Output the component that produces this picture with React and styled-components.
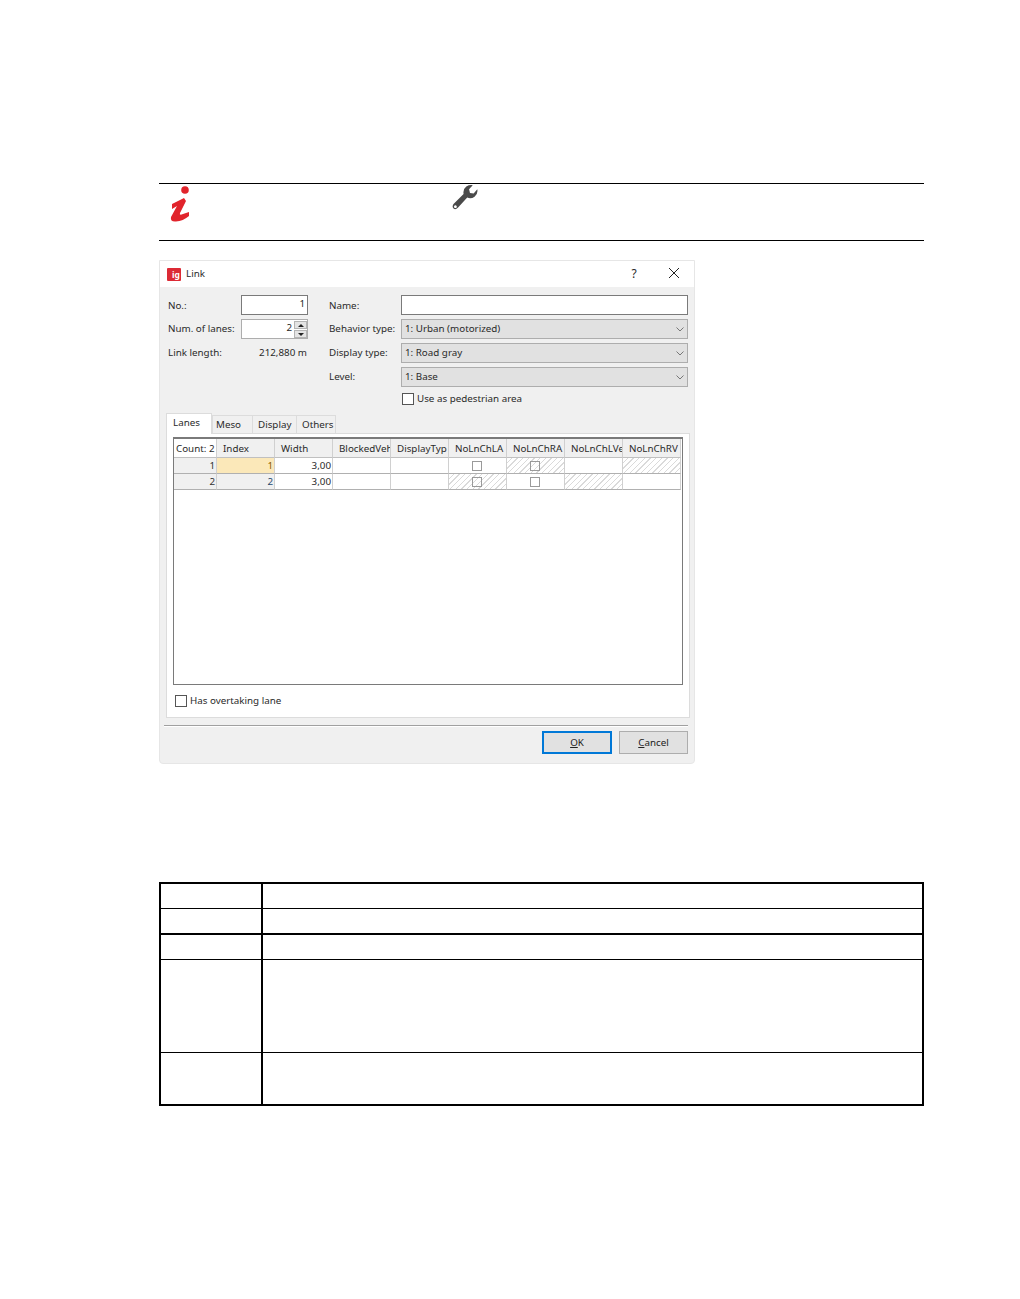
import React from "react";
import styled, { createGlobalStyle, css } from "styled-components";

const Global = createGlobalStyle`
  html, body { margin: 0; background: #fff; }
  body { font-family: "Noto Sans", "Open Sans", sans-serif; font-size: 9.8px; color: #2a2a2a; }
`;
const Page = styled.div`
  width: 765px;
  padding: 183px 96px 193px 159px;
`;
const Note = styled.section`
  height: 56px;
  border-top: 1px solid #000;
  border-bottom: 1px solid #000;
  display: flex;
  align-items: flex-start;
`;
const InfoIcon = styled.svg`
  width: 40px;
  height: 50px;
  margin-top: -4px;
  filter: blur(0.4px);
`;
const ToolIcon = styled.svg`
  width: 37px;
  height: 32px;
  margin: -2px 0 0 247px;
  filter: blur(0.5px);
`;
const Dialog = styled.div`
  width: 534px;
  height: 502px;
  margin-top: 19px;
  border: 1px solid #e6e6e6;
  border-radius: 0 0 4px 4px;
  background: #f0f0f0;
  display: flex;
  flex-direction: column;
`;
const TitleBar = styled.header`
  height: 26px;
  background: #fff;
  display: flex;
  align-items: center;
  padding-left: 7px;
  line-height: 24px;
`;
const AppLogo = styled.span`
  width: 14px;
  height: 13px;
  background: #dc2a35;
  color: #fff;
  font-size: 8.5px;
  font-weight: 700;
  line-height: 13px;
  text-align: right;
  padding-right: 1px;
  box-sizing: border-box;
  border-radius: 1px;
`;
const Title = styled.span`
  margin-left: 5px;
  flex: 1;
`;
const Help = styled.span`
  width: 40px;
  font-size: 12px;
  text-align: center;
  margin-right: 14px;
`;
const CloseIcon = styled.svg`
  width: 12px;
  height: 12px;
  margin-right: 14px;
  margin-top: -2px;
`;
const Body = styled.div`
  flex: 1;
  padding: 8px 4px 0 6px;
  display: flex;
  flex-direction: column;
`;
const Form = styled.div`
  margin-left: 2px;
  display: grid;
  grid-template-columns: 73px 67px 21px 72px 287px;
  grid-template-rows: repeat(4, 20px) 15px;
  row-gap: 4px;
  align-items: center;
`;
const Label = styled.label`
  line-height: ${(p) => (p.$first ? 21 : 19)}px;
  height: 20px;
  white-space: nowrap;
  grid-column: ${(p) => p.$col};
`;
const Input = styled.div`
  height: 20px;
  box-sizing: border-box;
  background: #fff;
  border: 1px solid ${(p) => p.$border || "#7a7a7a"};
  text-align: right;
  padding-right: 2px;
  line-height: 16px;
  grid-column: ${(p) => p.$col};
  position: relative;
`;
const SpinInput = styled(Input)`
  padding-right: 15px;
`;
const Spin = styled.span`
  position: absolute;
  top: 1px;
  right: 0;
  width: 13px;
  height: 17px;
  display: flex;
  flex-direction: column;
  gap: 1px;
`;
const SpinPart = styled.span`
  flex: 1;
  background: #e4e4e4;
  border: 1px solid #b4b4b4;
  display: flex;
  align-items: center;
  justify-content: center;
  &::after {
    content: "";
    border-left: 3px solid transparent;
    border-right: 3px solid transparent;
    ${(p) => (p.$up ? "border-bottom: 3px solid #222;" : "border-top: 3px solid #222;")}
  }
`;
const Value = styled.div`
  text-align: right;
  grid-column: 2;
  line-height: 19px;
  height: 20px;
  padding-right: 1px;
`;
const Select = styled.div`
  grid-column: 5;
  height: 20px;
  box-sizing: border-box;
  background: #e1e1e1;
  border: 1px solid #adadad;
  display: flex;
  align-items: center;
  justify-content: space-between;
  padding: 0 3px;
  line-height: 16px;
`;
const ChevronIcon = styled.svg`
  width: 8px;
  height: 5px;
`;
const CheckRow = styled.div`
  display: flex;
  align-items: center;
  gap: 3px;
  ${(p) => p.$col && css`grid-column: ${p.$col}; margin-left: 1px; height: 15px;`}
`;
const Box = styled.span`
  width: 12px;
  height: 12px;
  box-sizing: border-box;
  background: #fff;
  border: 1px solid #555;
  display: block;
`;
const Tabs = styled.div`
  display: flex;
  align-items: flex-end;
  margin-top: 7px;
  height: 20px;
  position: relative;
`;
const Tab = styled.div`
  width: ${(p) => p.$w}px;
  box-sizing: border-box;
  text-align: left;
  padding-left: ${(p) => p.$pad}px;
  border: 1px solid #dcdcdc;
  border-bottom: none;
  margin-right: ${(p) => (p.$active ? 0 : -1)}px;
  height: ${(p) => (p.$active ? 21 : 18)}px;
  line-height: ${(p) => (p.$active ? 18 : 17)}px;
  background: ${(p) => (p.$active ? "#fff" : "#f0f0f0")};
  position: relative;
  z-index: ${(p) => (p.$active ? 1 : 0)};
  ${(p) => p.$active && "margin-bottom: -1px;"}
`;
const Panel = styled.div`
  width: 524px;
  height: 285px;
  box-sizing: border-box;
  background: #fff;
  border: 1px solid #dcdcdc;
  padding: 3px 6px 0;
  display: flex;
  flex-direction: column;
`;
const Grid = styled.div`
  width: 510px;
  height: 248px;
  box-sizing: border-box;
  border: 1px solid #7a7a7a;
  border-top-width: 2px;
  display: grid;
  grid-template-columns: 43px repeat(8, 58px);
  grid-auto-rows: 16px;
  grid-template-rows: 19px;
  align-content: start;
`;
const cellKinds = {
  corner: "background: #fff; text-align: left; padding-left: 2px;",
  head: "background: #f0f0f0; text-align: left; padding-left: 6px;",
  rowHead: "background: #f0f0f0; text-align: right; color: #333;",
  index: "background: #f0f0f0; text-align: right; color: #27496d;",
  active: "background: #fbe8b9; text-align: right; color: #8a5a00;",
  data: "background: #fff; text-align: right;",
};
const Cell = styled.div`
  box-sizing: border-box;
  border-right: 1px solid #d0d0d0;
  border-bottom: 1px solid ${(p) => (p.$kind === "head" || p.$kind === "corner" ? "#c0c0c0" : "#b0b0b0")};
  padding: 0 1px;
  white-space: nowrap;
  overflow: hidden;
  line-height: ${(p) => (p.$kind === "head" || p.$kind === "corner" ? 20 : 16)}px;
  display: ${(p) => (p.$center ? "flex" : "block")};
  align-items: center;
  justify-content: center;
  ${(p) => cellKinds[p.$kind]}
  ${(p) =>
    p.$hatch &&
    css`
      background: repeating-linear-gradient(135deg, #fff 0, #fff 3px, #dadada 3px, #dadada 4px);
    `}
`;
const CellBox = styled.span`
  width: 10px;
  height: 10px;
  box-sizing: border-box;
  display: block;
  margin-left: -1px;
  border: 1px solid #9a9a9a;
  background: ${(p) => (p.$hatch ? "transparent" : "#fff")};
`;
const PanelCheck = styled(CheckRow)`
  margin: 9px 0 0 2px;
  height: 13px;
`;
const FooterRule = styled.div`
  margin: 7px 2px 0 -2px;
  border-top: 1px solid #a0a0a0;
  border-bottom: 1px solid #fff;
`;
const Footer = styled.div`
  display: flex;
  justify-content: flex-end;
  gap: 7px;
  margin-top: 4px;
  padding-right: 2px;
`;
const Button = styled.button`
  width: ${(p) => (p.$primary ? 70 : 69)}px;
  height: 23px;
  box-sizing: border-box;
  font: inherit;
  color: #222;
  padding: 0;
  background: #e1e1e1;
  border: ${(p) => (p.$primary ? "2px solid #0078d7" : "1px solid #adadad")};
  u { text-underline-offset: 1px; }
`;
const Table = styled.div`
  margin-top: 118px;
  border: 2px solid #000;
  width: 765px;
  box-sizing: border-box;
`;
const Row = styled.div`
  display: grid;
  grid-template-columns: 102px 1fr;
  height: ${(p) => p.$h}px;
  border-top: ${(p) => p.$top || 0}px solid #000;
`;
const KeyCell = styled.div`
  border-right: 2px solid #000;
`;
const ValCell = styled.div``;

const headers = ["BlockedVeh", "DisplayTyp", "NoLnChLA", "NoLnChRA", "NoLnChLVe", "NoLnChRV"];

function Chevron() {
  return (
    <ChevronIcon viewBox="0 0 8 5">
      <path d="M0.5 0.5 L4 4 L7.5 0.5" stroke="#777" strokeWidth="1" fill="none" />
    </ChevronIcon>
  );
}

function LaneRow({ n, active, cells }) {
  return (
    <>
      <Cell $kind="rowHead">{n}</Cell>
      <Cell $kind={active ? "active" : "index"}>{n}</Cell>
      <Cell $kind="data">3,00</Cell>
      <Cell $kind="data" />
      <Cell $kind="data" />
      {cells.map((c, i) => (
        <Cell key={i} $kind="data" $center $hatch={c.hatch}>
          {c.box && <CellBox $hatch={c.hatch} />}
        </Cell>
      ))}
    </>
  );
}

export default function App() {
  return (
    <Page>
      <Global />
      <Note>
        <InfoIcon viewBox="0 0 40 50">
          <circle cx="26" cy="10" r="3.8" fill="#e1242c" />
          <path
            d="M13 24 L25 18 L27 21 L21 33 Q20 36 24 34 L30 32 L30 36 Q24 41 17 41.5 Q11 42 12 37 L18 26 L13 29 Z"
            fill="#e1242c"
          />
        </InfoIcon>
        <ToolIcon viewBox="0 0 40 35">
          <path
            fillRule="evenodd"
            d="M8 24 L19 13 Q18 8 22 5 Q25 3 29 3.5 L25 8 L26 12 L30 12.5 L34 8 Q35 13 31 16 Q27 19 23 17 L13 28 Q10 31 8 29 Q6 27 8 24 Z M10 25.5 a1.5 1.5 0 1 0 0.1 0 Z"
            fill="#4a4a4a"
          />
        </ToolIcon>
      </Note>
      <Dialog>
        <TitleBar>
          <AppLogo>ig</AppLogo>
          <Title>Link</Title>
          <Help>?</Help>
          <CloseIcon viewBox="0 0 12 12">
            <path d="M1 1 L11 11 M11 1 L1 11" stroke="#222" strokeWidth="1" fill="none" />
          </CloseIcon>
        </TitleBar>
        <Body>
          <Form>
            <Label $col={1} $first>No.:</Label>
            <Input $col={2}>1</Input>
            <Label $col={4} $first>Name:</Label>
            <Input $col={5} />
            <Label $col={1}>Num. of lanes:</Label>
            <SpinInput $col={2} $border="#adadad">
              2
              <Spin>
                <SpinPart $up />
                <SpinPart />
              </Spin>
            </SpinInput>
            <Label $col={4}>Behavior type:</Label>
            <Select>
              1: Urban (motorized)
              <Chevron />
            </Select>
            <Label $col={1}>Link length:</Label>
            <Value>212,880 m</Value>
            <Label $col={4}>Display type:</Label>
            <Select>
              1: Road gray
              <Chevron />
            </Select>
            <Label $col={4}>Level:</Label>
            <Select>
              1: Base
              <Chevron />
            </Select>
            <CheckRow $col={5}>
              <Box />
              Use as pedestrian area
            </CheckRow>
          </Form>
          <Tabs>
            <Tab $w={46} $active $pad={6}>Lanes</Tab>
            <Tab $w={41} $pad={3}>Meso</Tab>
            <Tab $w={45} $pad={5}>Display</Tab>
            <Tab $w={40} $pad={5}>Others</Tab>
          </Tabs>
          <Panel>
            <Grid>
              <Cell $kind="corner">Count: 2</Cell>
              <Cell $kind="head">Index</Cell>
              <Cell $kind="head">Width</Cell>
              {headers.map((h) => (
                <Cell key={h} $kind="head">{h}</Cell>
              ))}
              <LaneRow
                n={1}
                active
                cells={[{ box: true }, { box: true, hatch: true }, {}, { hatch: true }]}
              />
              <LaneRow
                n={2}
                cells={[{ box: true, hatch: true }, { box: true }, { hatch: true }, {}]}
              />
            </Grid>
            <PanelCheck>
              <Box />
              Has overtaking lane
            </PanelCheck>
          </Panel>
          <FooterRule />
          <Footer>
            <Button $primary><u>O</u>K</Button>
            <Button><u>C</u>ancel</Button>
          </Footer>
        </Body>
      </Dialog>
      <Table>
        <Row $h={24}><KeyCell /><ValCell /></Row>
        <Row $h={24} $top={1}><KeyCell /><ValCell /></Row>
        <Row $h={24} $top={2}><KeyCell /><ValCell /></Row>
        <Row $h={92} $top={1}><KeyCell /><ValCell /></Row>
        <Row $h={51} $top={1}><KeyCell /><ValCell /></Row>
      </Table>
    </Page>
  );
}
